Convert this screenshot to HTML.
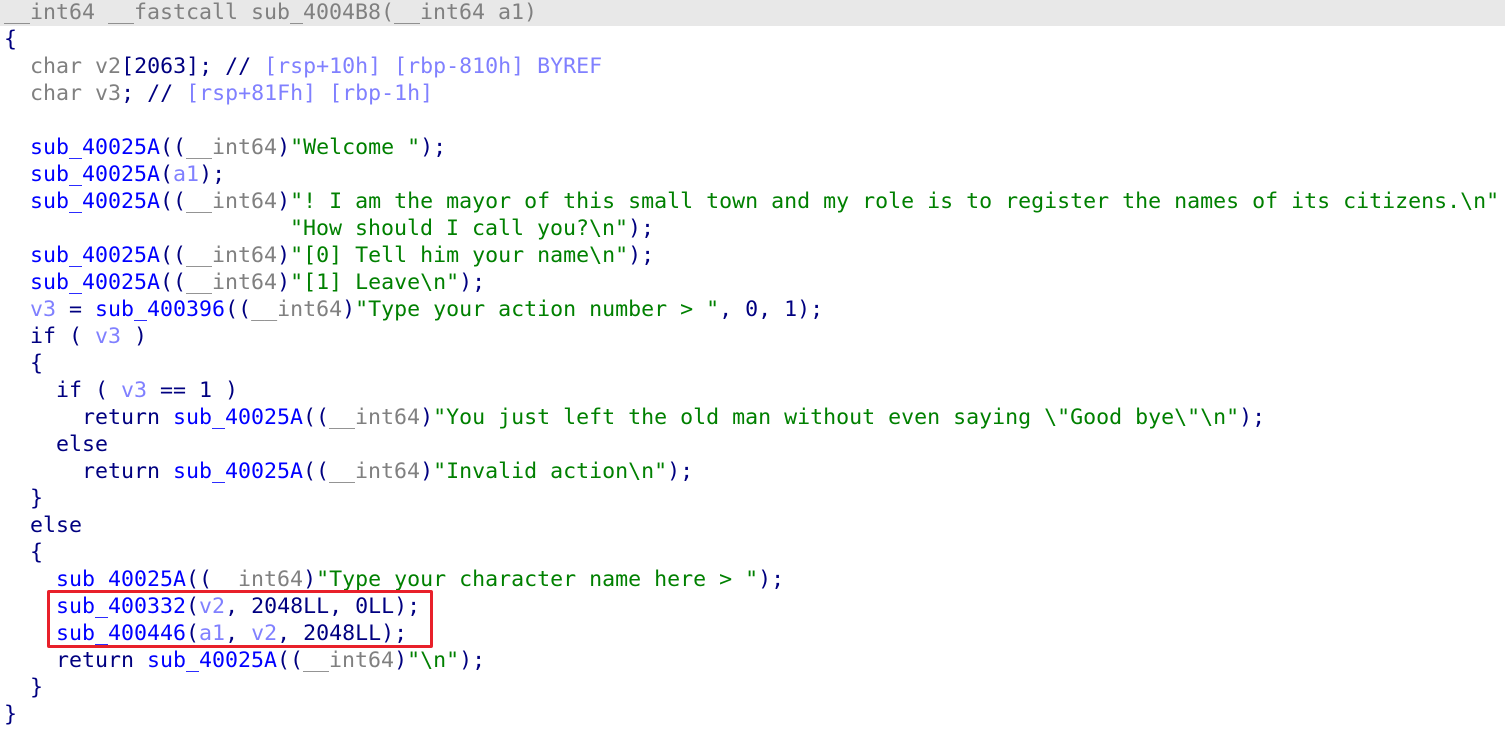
<!DOCTYPE html><html><head><style>
body{margin:0;background:#fff;width:1505px;height:733px;overflow:hidden;position:relative}
pre{margin:0;font-family:"DejaVu Sans Mono","Liberation Mono",monospace;font-size:21.6px;line-height:27px;color:#000080;position:absolute;left:4px;top:-1px;white-space:pre}
.hd{position:absolute;left:0;top:0;width:1505px;height:26px;background:#e8e8e8}
.t{color:#808080}.f{color:#0000ff}.v{color:#8080ff}.s{color:#008000}.c{color:#8080ff}
.box{position:absolute;left:47px;top:590px;width:380px;height:52px;border:3px solid #e8202a;border-radius:2px}
</style></head><body><div class="hd"></div>
<pre><span class="t">__int64 __fastcall sub_4004B8(__int64 a1)</span>
{
  <span class="t">char</span> <span class="t">v2</span>[2063]; // <span class="c">[rsp+10h] [rbp-810h] BYREF</span>
  <span class="t">char</span> <span class="t">v3</span>; // <span class="c">[rsp+81Fh] [rbp-1h]</span>

  <span class="f">sub_40025A</span>((<span class="t">__int64</span>)<span class="s">"Welcome "</span>);
  <span class="f">sub_40025A</span>(<span class="v">a1</span>);
  <span class="f">sub_40025A</span>((<span class="t">__int64</span>)<span class="s">"! I am the mayor of this small town and my role is to register the names of its citizens.\n"</span>
                      <span class="s">"How should I call you?\n"</span>);
  <span class="f">sub_40025A</span>((<span class="t">__int64</span>)<span class="s">"[0] Tell him your name\n"</span>);
  <span class="f">sub_40025A</span>((<span class="t">__int64</span>)<span class="s">"[1] Leave\n"</span>);
  <span class="v">v3</span> = <span class="f">sub_400396</span>((<span class="t">__int64</span>)<span class="s">"Type your action number &gt; "</span>, 0, 1);
  if ( <span class="v">v3</span> )
  {
    if ( <span class="v">v3</span> == 1 )
      return <span class="f">sub_40025A</span>((<span class="t">__int64</span>)<span class="s">"You just left the old man without even saying \"Good bye\"\n"</span>);
    else
      return <span class="f">sub_40025A</span>((<span class="t">__int64</span>)<span class="s">"Invalid action\n"</span>);
  }
  else
  {
    <span class="f">sub_40025A</span>((<span class="t">__int64</span>)<span class="s">"Type your character name here &gt; "</span>);
    <span class="f">sub_400332</span>(<span class="v">v2</span>, 2048LL, 0LL);
    <span class="f">sub_400446</span>(<span class="v">a1</span>, <span class="v">v2</span>, 2048LL);
    return <span class="f">sub_40025A</span>((<span class="t">__int64</span>)<span class="s">"\n"</span>);
  }
}</pre>
<div class="box"></div>
</body></html>
